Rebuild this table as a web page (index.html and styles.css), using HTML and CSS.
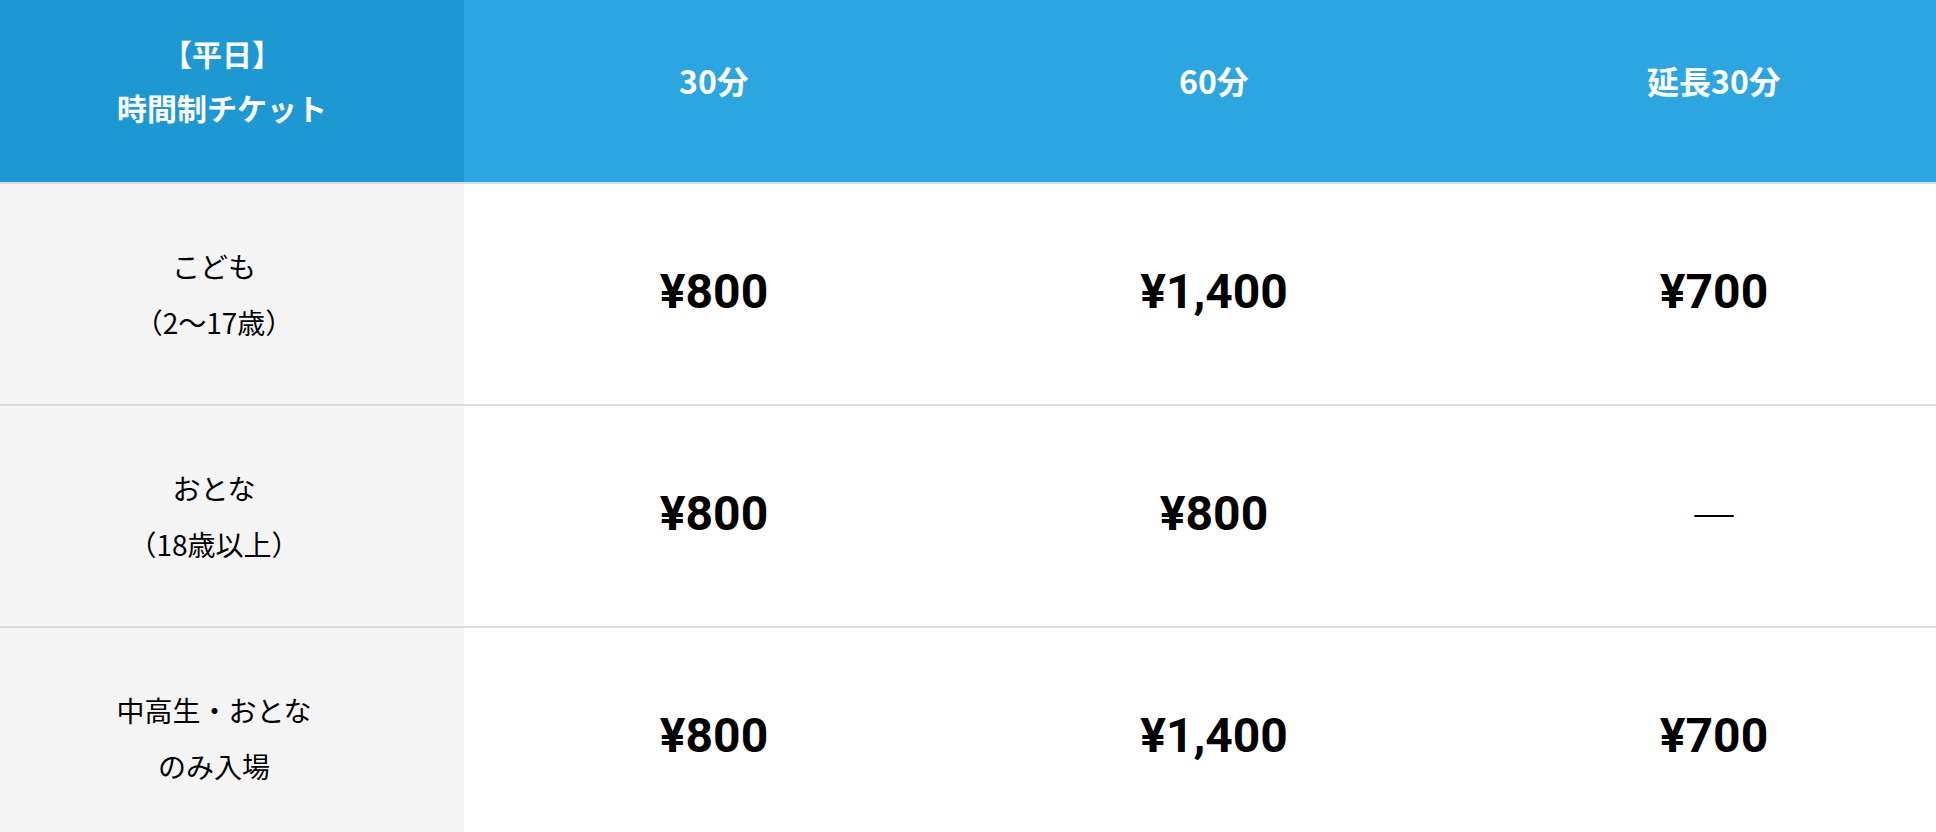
FILE: index.html
```html
<!DOCTYPE html>
<html lang="ja">
<head>
    <meta charset="UTF-8">
    <meta name="viewport" content="width=device-width, initial-scale=1.0">
    <title>料金表</title>
    <link rel="stylesheet" href="styles.css">
</head>
<body>

    <div class="price-wrap">
        <table class="price-table">
            <colgroup>
                <col class="col-label">
                <col class="col-price">
                <col class="col-price">
                <col class="col-price">
            </colgroup>
            <thead>
                <tr>
                    <th class="head-label">【平日】<br>時間制チケット</th>
                    <th>30分</th>
                    <th>60分</th>
                    <th>延長30分</th>
                </tr>
            </thead>
            <tbody>
                <tr>
                    <th class="row-label">こども<br>（2〜17歳）</th>
                    <td>¥800</td>
                    <td>¥1,400</td>
                    <td>¥700</td>
                </tr>
                <tr>
                    <th class="row-label">おとな<br>（18歳以上）</th>
                    <td>¥800</td>
                    <td>¥800</td>
                    <td class="none">―</td>
                </tr>
                <tr>
                    <th class="row-label">中高生・おとな<br>のみ入場</th>
                    <td>¥800</td>
                    <td>¥1,400</td>
                    <td>¥700</td>
                </tr>
            </tbody>
        </table>
    </div>

</body>
</html>
```

FILE: styles.css
```css
body {
    margin: 0;
    font-family: Roboto, "Noto Sans CJK JP", sans-serif;
    color: #000;
    background: #fff;
}

.price-wrap {
    width: 100%;
    overflow: hidden;
}

.price-table {
    table-layout: fixed;
    width: 1964px;
    border-collapse: collapse;
}

.price-table .col-label {
    width: 464px;
}
.price-table .col-price {
    width: 500px;
}

.price-table thead th {
    height: 160px;
    padding: 0 0 22px 0;
    background-color: #2ca6e0;
    color: #fff;
    font-family: "Noto Sans CJK JP", sans-serif;
    font-size: 32px;
    font-weight: bold;
    line-height: 54px;
    text-align: center;
    vertical-align: middle;
    border-bottom: 2px solid #dcdcdc;
}

.price-table thead .head-label {
    background-color: #1e98d3;
    padding-right: 20px;
    font-size: 30px;
}

.price-table tbody tr {
    border-bottom: 2px solid #dcdcdc;
}

.price-table .row-label {
    height: 220px;
    padding: 0 36px 0 0;
    background-color: #f4f4f4;
    font-family: "Noto Sans CJK JP", sans-serif;
    font-size: 28px;
    font-weight: normal;
    line-height: 56px;
    text-align: center;
    vertical-align: middle;
}

.price-table td {
    padding: 0 0 6px 0;
    font-family: Roboto, "Noto Sans CJK JP", sans-serif;
    font-size: 48px;
    font-weight: bold;
    text-align: center;
    vertical-align: middle;
}

.price-table td.none {
    font-family: "Noto Sans CJK JP", sans-serif;
    font-size: 46px;
    font-weight: normal;
}
```
